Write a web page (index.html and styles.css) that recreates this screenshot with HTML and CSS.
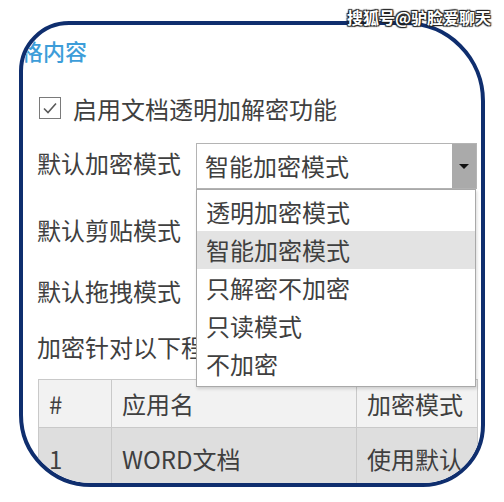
FILE: index.html
```html
<!DOCTYPE html>
<html lang="zh-CN">
<head>
  <meta charset="UTF-8">
  <meta name="viewport" content="width=device-width, initial-scale=1.0">
  <title>透明加解密设置</title>
  <link rel="stylesheet" href="styles.css">
</head>
<body>
  <div class="watermark">搜狐号@驴脸爱聊天</div>
  <div class="frame">
    <div class="panel">
      <h2 class="panel-title">格内容</h2>

      <label class="check-row">
        <span class="check-box">
          <svg width="18" height="18" viewBox="0 0 18 18"><path d="M3 9.5 L7 13.5 L15 4.5" fill="none" stroke="#5a5a5a" stroke-width="1.6"/></svg>
        </span>
        启用文档透明加解密功能
      </label>

      <div class="form-row first">
        <span class="form-label">默认加密模式</span>
        <div class="select">
          <span class="select-value">智能加密模式</span>
          <span class="select-btn"><span class="arrow"></span></span>
          <ul class="select-list">
            <li>透明加密模式</li>
            <li class="active">智能加密模式</li>
            <li>只解密不加密</li>
            <li>只读模式</li>
            <li>不加密</li>
          </ul>
        </div>
      </div>

      <div class="form-row second"><span class="form-label">默认剪贴模式</span></div>
      <div class="form-row third"><span class="form-label">默认拖拽模式</span></div>
      <div class="form-row fourth"><span class="form-label cut">加密针对以下程序</span></div>

      <table class="app-table">
        <tr class="head">
          <td class="col-num">#</td>
          <td class="col-name">应用名</td>
          <td class="col-mode">加密模式</td>
        </tr>
        <tr class="row">
          <td>1</td>
          <td>WORD文档</td>
          <td>使用默认</td>
        </tr>
      </table>
    </div>
  </div>
</body>
</html>
```

FILE: styles.css
```css
body {
  margin: 0;
  background: #fff;
  font-family: "Noto Sans CJK SC", "Noto Sans", sans-serif;
  color: #3f3f3f;
  position: relative;
  height: 502px;
  overflow: hidden;
}
.watermark {
  position: absolute;
  top: 5px;
  right: 13px;
  font-size: 16px;
  font-weight: bold;
  color: #fff;
  text-shadow: 0 0 1px #222, 1px 1px 1px #222, -1px -1px 1px #222, 1px -1px 1px #222, -1px 1px 1px #222;
  z-index: 2;
}
.frame {
  margin: 21px 0 0 19px;
  width: 466px;
  height: 466px;
  box-sizing: border-box;
  border: 4px solid #0f2e6e;
  border-radius: 50px 80px 62px 72px;
  overflow: hidden;
}
.panel {
  padding: 12px 0 0 14px;
}
.panel-title {
  margin: 0 0 0 -16px;
  font-size: 22px;
  line-height: 26px;
  font-weight: 500;
  color: #3d9dd9;
  height: 26px;
}
.check-row {
  display: flex;
  align-items: center;
  gap: 12px;
  margin-top: 30px;
  height: 30px;
  font-size: 24px;
  margin-left: 2px;
}
.check-box {
  width: 20px;
  height: 20px;
  flex-shrink: 0;
  border: 1px solid #7a7a7a;
  display: flex;
  align-items: center;
  justify-content: center;
}
.form-row {
  display: flex;
  font-size: 24px;
  line-height: 30px;
  height: 30px;
}
.form-row.first {
  margin-top: 20px;
  height: 46px;
  align-items: flex-start;
  position: relative;
  z-index: 1;
}
.form-row.first .form-label {
  padding-top: 5px;
}
.form-row.second { margin-top: 26px; }
.form-row.third { margin-top: 31px; }
.form-row.fourth { margin-top: 26px; }
.form-label {
  width: 159px;
  white-space: nowrap;
  flex-shrink: 0;
}
.form-label.cut {
  overflow: hidden;
}
.select {
  position: relative;
  width: 281px;
  height: 46px;
  box-sizing: border-box;
  border: 1px solid #b4b4b4;
  background: #fff;
  display: flex;
  align-items: center;
}
.select-value {
  flex: 1;
  padding-left: 8px;
}
.select-btn {
  width: 24px;
  height: 100%;
  background: #aaaaaa;
  display: flex;
  align-items: center;
  justify-content: center;
}
.arrow {
  width: 0;
  height: 0;
  border-left: 5px solid transparent;
  border-right: 5px solid transparent;
  border-top: 5px solid #111;
}
.select-list {
  position: absolute;
  top: 45px;
  left: -1px;
  width: 280px;
  box-sizing: border-box;
  margin: 0;
  padding: 3px 0;
  list-style: none;
  background: #fff;
  border: 1px solid #a9a9a9;
  box-shadow: 1px 2px 3px rgba(0, 0, 0, 0.15);
}
.select-list li {
  height: 38px;
  line-height: 38px;
  padding-left: 9px;
}
.select-list li.active {
  background: #e3e3e3;
}
.app-table {
  margin-top: 17px;
  margin-left: 1px;
  border-collapse: collapse;
  font-size: 24px;
  width: 420px;
  table-layout: fixed;
}
.app-table td {
  border: 1px solid #c9c9c9;
  padding: 0 0 0 10px;
  white-space: nowrap;
  overflow: hidden;
}
.app-table .head td {
  background: #f2f2f2;
  height: 47px;
}
.app-table .row td {
  background: #dedede;
  height: 60px;
}
.col-num { width: 62px; }
.col-name { width: 234px; }
.col-mode { width: 110px; }
```
